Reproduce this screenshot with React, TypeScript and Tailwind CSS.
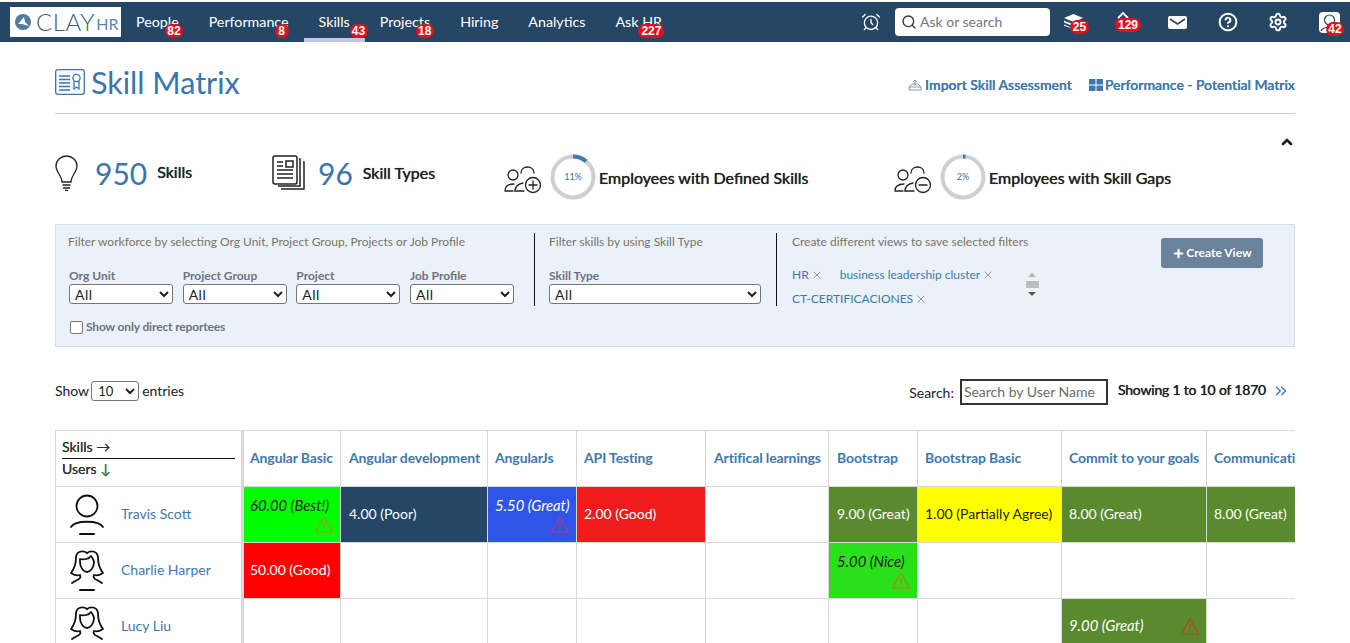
import React from "react";
import { AlarmClock, Search, CircleHelp, Settings, Plus, X, ChevronUp, ChevronsRight } from "lucide-react";

const Badge = ({ n, cls }: { n: string; cls: string }) => (
  <span className={`absolute h-[14px] rounded-full bg-[#e3101c] text-white text-[12px] leading-[14px] font-bold text-center ${cls}`} style={{ fontFamily: "'Liberation Sans', sans-serif" }}>{n}</span>
);

const nav = [
  { t: "People", b: "82", c: "left-[44px] w-[18px]" },
  { t: "Performance", b: "8", c: "left-[81px] w-[14px]" },
  { t: "Skills", b: "43", c: "left-[46px] w-[18px]", active: true },
  { t: "Projects", b: "18", c: "left-[51px] w-[18px]" },
  { t: "Hiring" },
  { t: "Analytics" },
  { t: "Ask HR", b: "227", c: "left-[38px] w-[26px]" },
];

const MaleAvatar = () => (
  <svg width="36" height="42" viewBox="0 0 36 42" fill="none" stroke="#111" strokeWidth="1.8" strokeLinecap="round">
    <circle cx="18" cy="12" r="10.5" />
    <path d="M2 33 C6 26 30 26 34 33" />
    <path d="M11 40 H25" strokeWidth="2" />
  </svg>
);

const FemaleAvatar = () => (
  <svg width="36" height="42" viewBox="0 0 36 42" fill="none" stroke="#111" strokeWidth="1.8" strokeLinecap="round" strokeLinejoin="round">
    <path d="M18 3 C14 0 7 1 7 8 C7 15 5 19 2 23 C5 25 8 26 11 25 C12 27 11 29 8 30 L3 33" />
    <path d="M18 3 C22 0 29 1 29 8 C29 15 31 19 34 23 C31 25 28 26 25 25 C24 27 25 29 28 30 L33 33" />
    <path d="M11 9 C15 10 20 9 22 6 C24 9 25 10 25 12 C25 18 21 22 18 22 C15 22 11 18 11 12 Z" />
    <path d="M11 40 H25" strokeWidth="2" />
  </svg>
);

const Warn = ({ color, cls }: { color: string; cls: string }) => (
  <svg width="18" height="17" viewBox="0 0 18 17" fill="none" stroke={color} strokeWidth="1.1" className={`absolute right-[7px] ${cls}`}>
    <path d="M9 1 L17.5 16 H0.5 Z" />
    <path d="M9 6 V12 M9 13 V14.5" />
  </svg>
);

const People = ({ sign }: { sign: "plus" | "minus" }) => (
  <svg width="38" height="30" viewBox="0 0 38 30" fill="none" stroke="#222" strokeWidth="1.3" strokeLinecap="round" className="mt-[4px]">
    <circle cx="9" cy="11" r="5" />
    <path d="M1 27 C1 21 5 20 10 20 M1 27 H9" />
    <path d="M17 9 C17 1 30 1 30 9" />
    <path d="M11 27 C11 22 14 20 19 19" />
    <path d="M11 27 H20" />
    <circle cx="29" cy="21" r="7.5" />
    <path d="M25 21 H33" />
    {sign === "plus" && <path d="M29 17 V25" />}
  </svg>
);

const Donut = ({ pct, label }: { pct: number; label: string }) => {
  const c = 2 * Math.PI * 20.5;
  return (
    <div className="relative w-[46px] h-[46px]">
      <svg width="46" height="46" viewBox="0 0 46 46" className="-rotate-90">
        <circle cx="23" cy="23" r="20.5" fill="none" stroke="#cfcfcf" strokeWidth="4" />
        <circle cx="23" cy="23" r="20.5" fill="none" stroke="#3a7ab5" strokeWidth="4" strokeDasharray={`${(pct / 100) * c} ${c}`} />
      </svg>
      <span className="absolute inset-0 flex items-center justify-center text-[9px] text-[#3a6ea5]">{label}</span>
    </div>
  );
};

const Sel = ({ w }: { w: string }) => (
  <select className={`${w} h-[20px] bg-white border border-[#767676] rounded-[3px] text-[14px] leading-[18px] font-normal text-[#222] pl-[1px] tracking-[0.5px]`} style={{ appearance: "auto" }}>
    <option>All</option>
  </select>
);

const cols = [
  ["Angular Basic", 98], ["Angular development", 147], ["AngularJs", 89], ["API Testing", 129], ["Artifical learnings", 123],
  ["Bootstrap", 89], ["Bootstrap Basic", 144], ["Commit to your goals", 145], ["Communication", 120],
] as const;

const pads = ["pl-[6px]", "pl-[8px]", "pl-[7px]", "pl-[7px]", "pl-[8px]", "pl-[8px]", "pl-[7px]", "pl-[7px]", "pl-[7px]"];

type Cell = { t: string; bg: string; fg: string; it?: boolean; warn?: string; top?: boolean };
const green = "bg-[#5a8a2e]";
const rows: { name: string; f: boolean; cells: (Cell | null)[] }[] = [
  { name: "Travis Scott", f: false, cells: [
    { t: "60.00 (Best!)", bg: "bg-[#00ff00]", fg: "text-[#222]", it: true, warn: "#b58a1a", top: true },
    { t: "4.00 (Poor)", bg: "bg-[#264666]", fg: "text-white" },
    { t: "5.50 (Great)", bg: "bg-[#2f55e8]", fg: "text-white", it: true, warn: "#c0327a", top: true },
    { t: "2.00 (Good)", bg: "bg-[#ee1c1c]", fg: "text-white" },
    null,
    { t: "9.00 (Great)", bg: green, fg: "text-white" },
    { t: "1.00 (Partially Agree)", bg: "bg-[#ffff00]", fg: "text-[#222]" },
    { t: "8.00 (Great)", bg: green, fg: "text-white" },
    { t: "8.00 (Great)", bg: green, fg: "text-white" },
  ] },
  { name: "Charlie Harper", f: true, cells: [
    { t: "50.00 (Good)", bg: "bg-[#ff0000]", fg: "text-white" },
    null, null, null, null,
    { t: "5.00 (Nice)", bg: "bg-[#29e01a]", fg: "text-[#222]", it: true, warn: "#c8741a", top: true },
    null, null, null,
  ] },
  { name: "Lucy Liu", f: true, cells: [
    null, null, null, null, null, null, null,
    { t: "9.00 (Great)", bg: green, fg: "text-white", it: true, warn: "#c0401a" },
    null,
  ] },
];

const strong = "font-normal text-[#222] [text-shadow:0_0_0.7px_#222]";

export default function App() {
  return (
    <div className="h-[643px] w-[1350px] overflow-hidden bg-white pt-[2px] text-[#222]" style={{ fontFamily: "Lato, sans-serif" }}>
      <header className="h-[40px] bg-[#264666] flex items-stretch pl-[10px] text-white">
        <div className="w-[111px] h-[30px] mt-[5px] bg-white flex items-center pl-[5px] shrink-0">
          <svg width="16" height="16" viewBox="0 0 16 16"><circle cx="8" cy="8" r="8" fill="#55799a" /><path d="M3 10 L9 3 L10 8 L14 12 L7 10 Z" fill="#fff" /></svg>
          <span className="ml-[5px] text-[24px] font-light tracking-[0.6px] text-[#3d5f80] leading-none">CLAY</span>
          <span className="ml-[1px] text-[16px] text-[#5d86ad] leading-none mt-[3px]">HR</span>
        </div>
        <nav className="flex">
          {nav.map((n) => (
            <div key={n.t} className={`relative px-[15px] pt-[11px] text-[14.25px] leading-[18px] ${n.active ? "border-b-[4px] border-[#c3c5e6]" : ""}`}>
              {n.t}
              {n.b && <Badge n={n.b} cls={`top-[22px] ${n.c}`} />}
            </div>
          ))}
        </nav>
        <div className="ml-auto flex items-center pr-[10px]">
          <AlarmClock size={20} strokeWidth={1.6} className="mr-[14px]" />
          <div className="w-[155px] h-[28px] bg-white rounded-[4px] flex items-center pl-[6px] pb-[1px] mr-[14px] text-[#777] text-[14px]">
            <Search size={16} className="text-[#333] mr-[3px]" />
            Ask or search
          </div>
          <div className="relative w-[19px] h-[16px] mr-[32px]">
            <svg width="19" height="15" viewBox="0 0 19 15" fill="#fff" className="block">
              <path d="M9.5 0 L19 4 L9.5 8 L0 4 Z" />
              <path d="M0 6.5 L9.5 10.5 L19 6.5 V8.5 L9.5 12.5 L0 8.5 Z" />
              <path d="M0 10.5 L9.5 14.5 L19 10.5 V11.8 L9.5 15 L0 11.8 Z" />
            </svg>
            <Badge n="25" cls="top-[6px] left-[6px] w-[19px]" />
          </div>
          <div className="relative w-[16px] mr-[37px]">
            <svg width="16" height="18" viewBox="0 0 16 18" fill="none" stroke="#fff" strokeWidth="1.8" className="relative -top-[3px]"><path d="M3 8 L8 3 L13 8" /></svg>
            <Badge n="129" cls="top-[5px] left-0 w-[26px]" />
          </div>
          <svg width="19" height="13" viewBox="0 0 19 13" className="mr-[31px]">
            <rect width="19" height="13" rx="2" fill="#fff" />
            <path d="M2 3 L9.5 8 L17 3" fill="none" stroke="#264666" strokeWidth="1.6" />
          </svg>
          <CircleHelp size={20} strokeWidth={2.4} className="mr-[30px]" />
          <Settings size={20} strokeWidth={2.3} className="mr-[31px]" />
          <div className="relative w-[21px] h-[21px] bg-white rounded-[4px]">
            <svg width="21" height="21" viewBox="0 0 21 21" fill="none" stroke="#264666" strokeWidth="1.2"><circle cx="10.5" cy="8" r="5" /><path d="M2 19 C4 14 17 14 19 19" /></svg>
            <Badge n="42" cls="top-[10px] left-[7px] w-[18px]" />
          </div>
        </div>
      </header>

      <main className="px-[55px]">
        <div className="h-[72px] pt-[10px] flex items-center border-b border-[#c9c9c9]">
          <svg width="30" height="26" viewBox="0 0 30 26" fill="none" stroke="#3a75ad" strokeWidth="1.3" className="mt-[-2px]">
            <rect x="0.7" y="0.7" width="28.6" height="24.6" rx="2" />
            <path d="M4 7 H15 M4 10.5 H15 M4 14 H15 M4 17.5 H15 M4 21 H15" />
            <circle cx="21.5" cy="9" r="3.6" />
            <path d="M19 12 V20 L21.5 18 L24 20 V12" />
          </svg>
          <h1 className="ml-[6px] text-[30.5px] leading-none text-[#3a75ad] font-normal">Skill Matrix</h1>
          <div className="ml-auto flex items-center text-[14px] font-semibold text-[#3f78ad] mt-[4px] [text-shadow:0_0_0.4px_#3f78ad]">
            <svg width="14" height="12" viewBox="0 0 14 12" fill="none" stroke="#7b8b99" strokeWidth="0.9" className="mr-[3px]"><path d="M1 8 L4 5 H10 L13 8 V11 H1 Z M1 8 H13 M7 7 V1 M5 3 L7 1 L9 3" /></svg>
            Import Skill Assessment
            <svg width="14" height="12" viewBox="0 0 14 12" fill="#3f78ad" className="ml-[17px] mr-[2px]">
              <rect width="6.5" height="5.5" /><rect x="7.5" width="6.5" height="5.5" /><rect y="6.5" width="6.5" height="5.5" /><rect x="7.5" y="6.5" width="6.5" height="5.5" />
            </svg>
            <span className="tracking-[-0.03px]">Performance - Potential Matrix</span>
          </div>
        </div>

        <div className="relative h-[110px] flex items-start">
          <div className="flex items-center mt-[41px] w-[217px]">
            <svg width="23" height="36" viewBox="0 0 23 36" fill="none" stroke="#222" strokeWidth="1.3" strokeLinecap="round" className="shrink-0">
              <path d="M7 27 C7 21 1 17 1 11 C1 5 6 1 11.5 1 C17 1 22 5 22 11 C22 17 16 21 16 27 Z" />
              <path d="M8 30 H15 M8.5 33 H14.5 M10.5 35.5 H12.5" />
            </svg>
            <span className="text-[30px] text-[#3a75ad] leading-none ml-[17px]">950</span>
            <span className={`text-[16px] ml-[10px] -mt-[2px] ${strong}`}>Skills</span>
          </div>
          <div className="flex items-center mt-[41px] w-[232px]">
            <svg width="34" height="36" viewBox="0 0 34 36" fill="none" stroke="#222" strokeWidth="1.5">
              <rect x="1" y="1" width="24" height="28" rx="2" />
              <path d="M27 4 H28 V31 H6 M31 7 H32 V34 H9" />
              <path d="M5 7 H11 M5 11 H11 M5 15 H21 M5 19 H21 M5 23 H21" />
              <rect x="14" y="6" width="7" height="6" />
            </svg>
            <span className="text-[30px] text-[#3a75ad] leading-none ml-[12px]">96</span>
            <span className={`text-[16px] ml-[10px] ${strong}`}>Skill Types</span>
          </div>
          <div className="flex items-center mt-[40px] w-[390px]">
            <People sign="plus" />
            <span className="w-[8px]" />
            <Donut pct={11} label="11%" />
            <span className={`ml-[3px] mt-[1px] text-[16px] ${strong}`}>Employees with Defined Skills</span>
          </div>
          <div className="flex items-center mt-[40px]">
            <People sign="minus" />
            <span className="w-[8px]" />
            <Donut pct={2} label="2%" />
            <span className={`ml-[3px] mt-[1px] text-[16px] ${strong}`}>Employees with Skill Gaps</span>
          </div>
          <ChevronUp size={16} strokeWidth={4} className="absolute right-0 top-[20px] text-[#222]" />
        </div>

        <section className="h-[123px] bg-[#eaf1f8] border border-[#d5dde6] flex pt-[8px] text-[12px]">
          <div className="w-[478px] pl-[12px] shrink-0">
            <p className="text-[#7a7468] leading-[18px]">Filter workforce by selecting Org Unit, Project Group, Projects or Job Profile</p>
            <div className="flex gap-[9.67px] mt-[17px] ml-[1px]">
              {["Org Unit", "Project Group", "Project", "Job Profile"].map((l) => (
                <label key={l} className="flex flex-col font-bold text-[#6b7480] leading-[16px]">{l}<Sel w="w-[104px]" /></label>
              ))}
            </div>
            <label className="flex items-center mt-[14px] ml-[2px] font-bold text-[#6b7480] tracking-[-0.15px]">
              <span className="w-[13px] h-[13px] border border-[#767676] rounded-[2px] bg-white mr-[3px]" />
              Show only direct reportees
            </label>
          </div>
          <div className="w-px h-[73px] bg-[#111] shrink-0" />
          <div className="w-[241px] pl-[14px] shrink-0">
            <p className="text-[#7a7468] leading-[18px]">Filter skills by using Skill Type</p>
            <label className="flex flex-col font-bold text-[#6b7480] leading-[16px] mt-[17px]">Skill Type<Sel w="w-[212px]" /></label>
          </div>
          <div className="w-px h-[73px] bg-[#111] shrink-0" />
          <div className="relative flex-1 pl-[15px]">
            <p className="text-[#7a7468] leading-[18px]">Create different views to save selected filters</p>
            <div className="mt-[12px] text-[#3f78ad] leading-[24px]">
              <div className="flex items-center">HR<X size={12} strokeWidth={1} className="ml-[2px] text-[#444]" /><span className="ml-[17px]">business leadership cluster</span><X size={12} strokeWidth={1} className="ml-[2px] text-[#444]" /></div>
              <div className="flex items-center">CT-CERTIFICACIONES<X size={12} strokeWidth={1} className="ml-[2px] text-[#444]" /></div>
            </div>
            <div className="absolute left-[248px] top-[36px] w-[14px] h-[36px] bg-[#eef2f6] flex flex-col items-center">
              <span className="mt-[4px] border-x-[4px] border-x-transparent border-b-[4px] border-b-[#b0b0b0]" />
              <span className="mt-[4px] w-[13px] h-[7px] bg-[#bdbdbd]" />
              <span className="mt-[4px] border-x-[4px] border-x-transparent border-t-[4px] border-t-[#555]" />
            </div>
            <button className="absolute left-[384px] top-[5px] w-[102px] h-[30px] rounded-[3px] bg-[#6a829b] text-white text-[12px] font-bold flex items-center justify-center">
              <Plus size={13} strokeWidth={4} className="mr-[1px]" />Create View
            </button>
          </div>
        </section>

        <div className="h-[83px] flex items-start text-[14px]">
          <div className="flex items-center mt-[33px]">
            Show
            <select className="w-[48px] h-[20px] ml-[2px] mr-[3px] bg-white border border-[#767676] rounded-[3px] text-[13px] pl-[2px]" style={{ appearance: "auto" }}><option>10</option></select>
            entries
          </div>
          <div className="ml-auto flex items-center mt-[32px]">
            <span className="mr-[6px]">Search:</span>
            <div className="w-[148px] h-[26px] border-2 border-[#333] pl-[2px] text-[#6b6b6b] leading-[22px]">Search by User Name</div>
            <span className={`ml-[10px] text-[14px] tracking-[-0.2px] -mt-[5px] ${strong}`}>Showing 1 to 10 of 1870</span>
            <ChevronsRight size={18} strokeWidth={1.8} className="ml-[6px] mr-[5px] text-[#3f78ad] -mt-[3px]" />
          </div>
        </div>

        <div className="overflow-hidden w-[1240px]">
          <table className="border-collapse table-fixed w-[1271px] text-[14px]">
            <colgroup>
              <col className="w-[187px]" />
              {cols.map(([n, w]) => <col key={n} style={{ width: w }} />)}
            </colgroup>
            <thead>
              <tr className="h-[56px]">
                <th className="border border-[#d8d8d8] border-r-[3px] px-[6px] text-left font-normal text-[14px] text-[#333] [text-shadow:0_0_0.5px_#333]">
                  <div className="border-b border-[#111] h-[24px] leading-[24px]">Skills →</div>
                  <div className="h-[23px] leading-[20px]">Users <span className="text-[#3a8a3a]">↓</span></div>
                </th>
                {cols.map(([n], i) => (
                  <th key={n} className={`border border-[#d8d8d8] ${pads[i]} pr-[7px] pb-[2px] text-left font-bold tracking-[-0.12px] text-[#3f78ad] whitespace-nowrap overflow-hidden`}>{n}</th>
                ))}
              </tr>
            </thead>
            <tbody>
              {rows.map((r) => (
                <tr key={r.name} className="h-[56px]">
                  <td className="border border-[#d8d8d8] border-r-[3px] p-0">
                    <div className="flex items-center">
                      <span className="ml-[13px] w-[36px] flex justify-center">{r.f ? <FemaleAvatar /> : <MaleAvatar />}</span>
                      <span className="ml-[16px] mb-[2px] text-[#3f78ad]">{r.name}</span>
                    </div>
                  </td>
                  {r.cells.map((c, i) => (
                    <td key={i} className={`relative border border-[#d8d8d8] ${pads[i]} pr-[7px] whitespace-nowrap ${c ? c.bg + " " + c.fg : ""} ${c && c.it ? "italic text-[14.8px]" : ""} ${c && c.top ? "align-top pt-[7px]" : "pb-[2px]"}`}>
                      {c && c.t}
                      {c && c.warn && <Warn color={c.warn} cls={c.top ? "top-[29px]" : "top-[19px]"} />}
                    </td>
                  ))}
                </tr>
              ))}
            </tbody>
          </table>
        </div>
      </main>
    </div>
  );
}
